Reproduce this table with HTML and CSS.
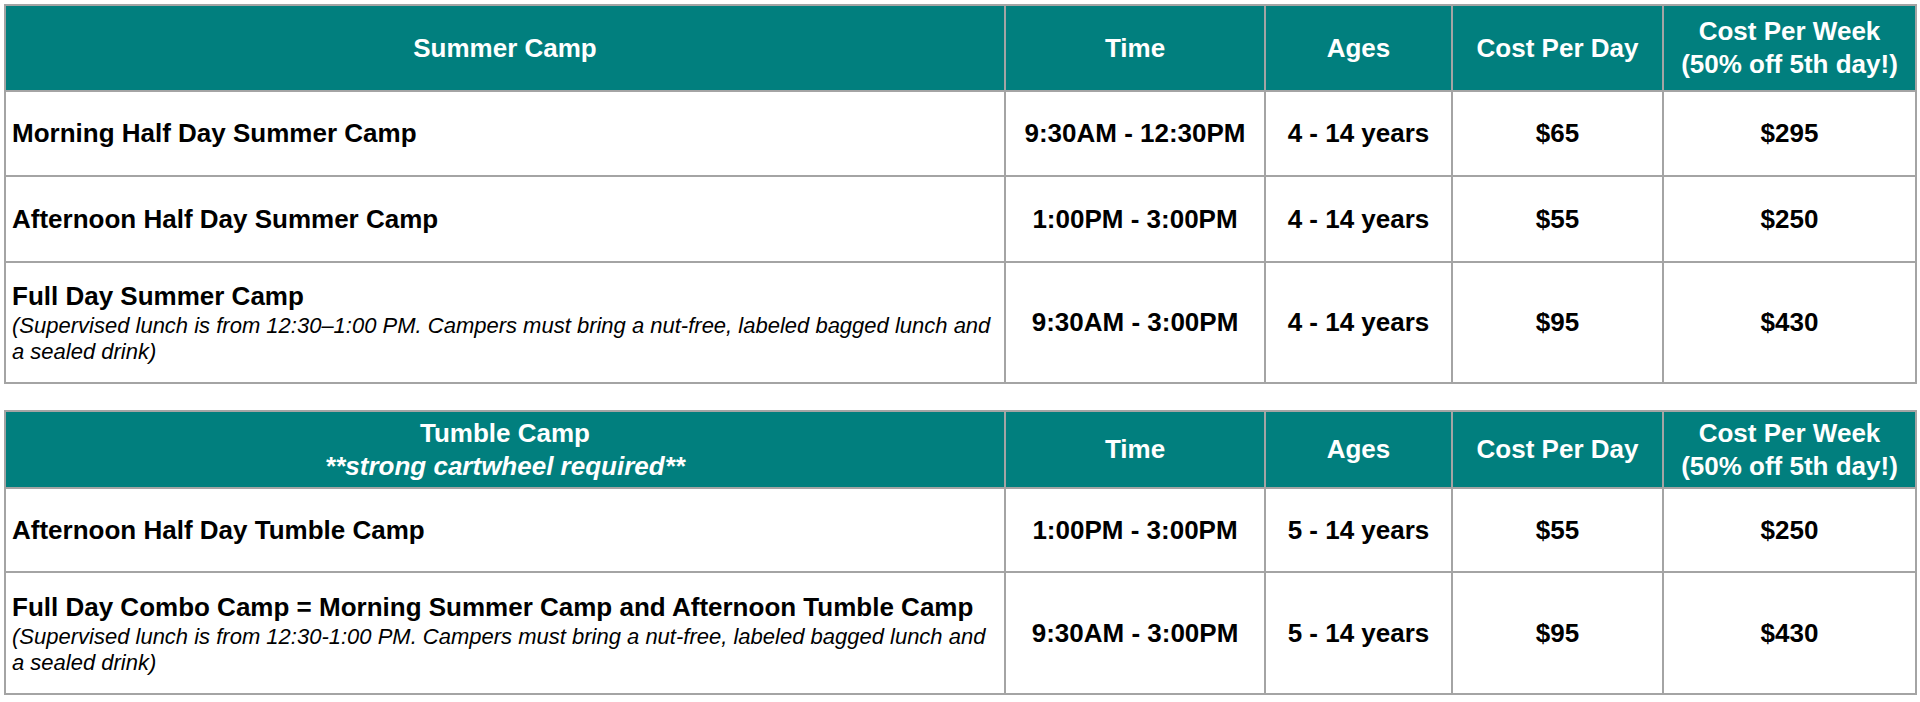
FILE: index.html
```html
<!DOCTYPE html>
<html lang="en">
<head>
<meta charset="utf-8">
<title>Camp Schedule</title>
<link rel="stylesheet" href="styles.css">
</head>
<body>
<table class="camp">
  <colgroup>
    <col class="c-name"><col class="c-time"><col class="c-ages"><col class="c-day"><col class="c-week">
  </colgroup>
  <thead>
    <tr class="head head-a">
      <th>Summer Camp</th>
      <th>Time</th>
      <th>Ages</th>
      <th>Cost Per Day</th>
      <th>Cost Per Week<br>(50% off 5th day!)</th>
    </tr>
  </thead>
  <tbody>
    <tr class="row-a">
      <td class="name">Morning Half Day Summer Camp</td>
      <td>9:30AM - 12:30PM</td>
      <td>4 - 14 years</td>
      <td>$65</td>
      <td>$295</td>
    </tr>
    <tr class="row-b">
      <td class="name">Afternoon Half Day Summer Camp</td>
      <td>1:00PM - 3:00PM</td>
      <td>4 - 14 years</td>
      <td>$55</td>
      <td>$250</td>
    </tr>
    <tr class="row-c">
      <td class="name">Full Day Summer Camp<span class="note">(Supervised lunch is from 12:30–1:00 PM. Campers must bring a nut-free, labeled bagged lunch and a sealed drink)</span></td>
      <td>9:30AM - 3:00PM</td>
      <td>4 - 14 years</td>
      <td>$95</td>
      <td>$430</td>
    </tr>
  </tbody>
</table>

<table class="camp second">
  <colgroup>
    <col class="c-name"><col class="c-time"><col class="c-ages"><col class="c-day"><col class="c-week">
  </colgroup>
  <thead>
    <tr class="head head-b">
      <th>Tumble Camp<br><em>**strong cartwheel required**</em></th>
      <th>Time</th>
      <th>Ages</th>
      <th>Cost Per Day</th>
      <th>Cost Per Week<br>(50% off 5th day!)</th>
    </tr>
  </thead>
  <tbody>
    <tr class="row-d">
      <td class="name">Afternoon Half Day Tumble Camp</td>
      <td>1:00PM - 3:00PM</td>
      <td>5 - 14 years</td>
      <td>$55</td>
      <td>$250</td>
    </tr>
    <tr class="row-e">
      <td class="name">Full Day Combo Camp = Morning Summer Camp and Afternoon Tumble Camp<span class="note">(Supervised lunch is from 12:30-1:00 PM. Campers must bring a nut-free, labeled bagged lunch and a sealed drink)</span></td>
      <td>9:30AM - 3:00PM</td>
      <td>5 - 14 years</td>
      <td>$95</td>
      <td>$430</td>
    </tr>
  </tbody>
</table>
</body>
</html>
```

FILE: styles.css
```css
html, body {
  margin: 0;
  padding: 0;
  background: #ffffff;
}

body {
  padding: 4px;
  font-family: "Liberation Sans", Arial, Helvetica, sans-serif;
  color: #000000;
}

.camp {
  width: 1911px;
  border-collapse: collapse;
  table-layout: fixed;
  border: 2px solid #a4a4a4;
}

.camp.second {
  margin-top: 26px;
}

.c-name { width: 1000px; }
.c-time { width: 260px; }
.c-ages { width: 187px; }
.c-day { width: 211px; }
.c-week { width: 253px; }

.camp th,
.camp td {
  border: 2px solid #a4a4a4;
  padding: 0 6px;
  text-align: center;
  vertical-align: middle;
  font-weight: bold;
  font-size: 26px;
  line-height: 33px;
}

.camp th {
  background: #017f7e;
  color: #ffffff;
}

.camp th em {
  font-style: italic;
}

.camp td.name {
  text-align: left;
}

.note {
  display: block;
  font-weight: normal;
  font-style: italic;
  font-size: 22px;
  line-height: 26px;
  margin-top: 0;
}

.head-a { height: 86px; }
.head-b { height: 77px; }
.row-a { height: 85px; }
.row-b { height: 86px; }
.row-c { height: 121px; }
.row-d { height: 84px; }
.row-e { height: 122px; }
```
